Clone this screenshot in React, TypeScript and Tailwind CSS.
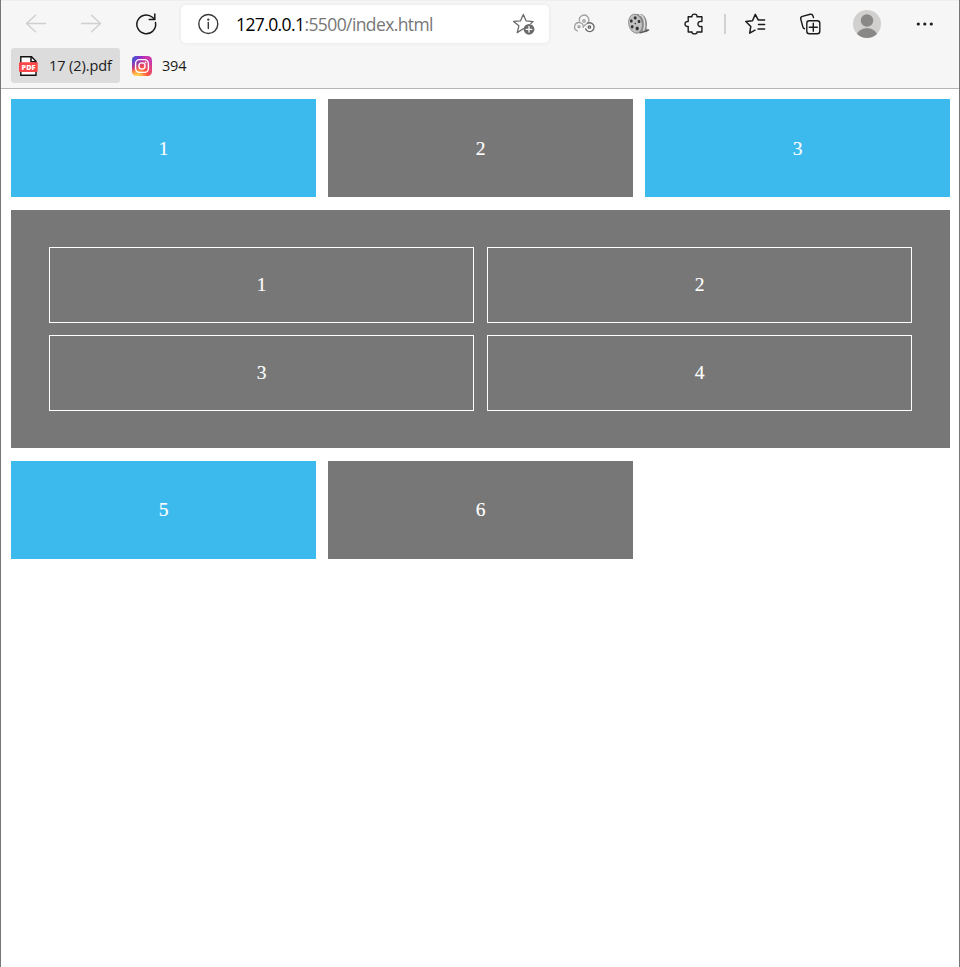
import React from "react";

const svg = {
  width: 30,
  height: 30,
  viewBox: "0 0 30 30",
  fill: "none",
  strokeLinecap: "round" as const,
  strokeLinejoin: "round" as const,
  className: "shrink-0",
};

function Back() {
  return (
    <svg {...svg} stroke="#cfcfcf" strokeWidth="1.4">
      <path d="M24.5 14.5H5.5M14.5 6.3L5.5 14.5L14.5 22.7" />
    </svg>
  );
}

function Forward() {
  return (
    <svg {...svg} stroke="#cfcfcf" strokeWidth="1.4">
      <path d="M5.5 14.5H24.5M15.5 6.3L24.5 14.5L15.5 22.7" />
    </svg>
  );
}

function Reload() {
  return (
    <svg {...svg} stroke="#1b1b1b" strokeWidth="1.5">
      <path d="M24.5 13.6A9.4 9.4 0 1 1 21.4 8.2L23.6 10.3" />
      <path d="M23.8 5V10.6H18.2" />
    </svg>
  );
}

function Info() {
  return (
    <svg {...svg} stroke="#3a3a3a" strokeWidth="1.4">
      <circle cx="15.3" cy="15" r="9.5" />
      <path d="M15.3 13.5V19.5" />
      <circle cx="15.3" cy="10.6" r="0.5" fill="#3a3a3a" />
    </svg>
  );
}

function AddFavorite() {
  return (
    <svg {...svg} stroke="#6b6b6b" strokeWidth="1.3">
      <path d="M14.3 19.7L8.2 23.6L9.9 16.8L4.6 12.4L11.4 11.9L14.3 5.4L17.2 11.9L24.2 12.6L21.8 14.5" />
      <circle cx="20" cy="20.3" r="5.4" fill="#6b6b6b" stroke="none" />
      <path d="M20 17.5V23.1M17.2 20.3H22.8" stroke="#fff" />
    </svg>
  );
}

function Rings() {
  return (
    <svg {...svg} strokeWidth="1.3">
      <path d="M10.6 12.2A4.7 4.7 0 1 1 18.4 14.2C17.2 15.8 15.5 15.6 14.5 17.6" stroke="#a2a2a2" />
      <path d="M8.4 21.9A4.3 4.3 0 1 1 14.2 18.4" stroke="#a2a2a2" />
      <path d="M18.8 14.2A4.4 4.4 0 1 1 16.6 19.8" stroke="#666" />
      <circle cx="15" cy="11.9" r="1.2" stroke="#a0a0a0" />
      <circle cx="10" cy="17.7" r="1" stroke="#a0a0a0" />
      <circle cx="20.4" cy="18" r="1.2" stroke="#5e5e5e" />
    </svg>
  );
}

function FilmReel() {
  return (
    <svg {...svg} stroke="none">
      <path d="M10 5L17 5C21 6 23.3 11 23 16L22.5 19.5L25 21L23 23L17 23.8L12 24.5Z" fill="#898989" />
      <path d="M15.5 5.8C20.5 7 22 15 19.5 22" stroke="#dedede" strokeWidth="1.5" />
      <path d="M16 24L22 21.8L24.8 21" stroke="#555" strokeWidth="1.3" />
      <ellipse cx="11.5" cy="14.6" rx="6.8" ry="9.6" transform="rotate(-12 11.5 14.6)" fill="#c2c2c2" stroke="#858585" strokeWidth="0.8" />
      <g fill="#353535">
        <ellipse cx="11.2" cy="8.9" rx="1.5" ry="1.6" />
        <ellipse cx="7.3" cy="12" rx="1.4" ry="1.8" />
        <ellipse cx="15" cy="12.5" rx="1.4" ry="1.8" />
        <ellipse cx="8.2" cy="17.7" rx="1.4" ry="1.8" />
        <ellipse cx="13.2" cy="19.6" rx="1.6" ry="2" />
        <circle cx="11.3" cy="14.6" r="0.8" />
      </g>
    </svg>
  );
}

function Puzzle() {
  return (
    <svg {...svg} stroke="#1b1b1b" strokeWidth="1.4">
      <path d="M9.2 7.8H13C12.7 6.2 13.9 5.1 15.5 5.1S18.3 6.2 18 7.8H22.9V12.5C20.5 12 18.9 13.1 18.9 15S20.5 18 22.9 17.5V23H18C18.3 24.2 17.2 24.9 15.5 24.9S12.7 24.2 13 23H9.2V17.5C7.2 17.8 6 16.7 6 15S7.2 12.2 9.2 12.5Z" />
    </svg>
  );
}

function Favorites() {
  return (
    <svg {...svg} stroke="#1b1b1b" strokeWidth="1.5">
      <path d="M15 21.2L9.7 24.1L10.8 17.5L5.8 12.5L12.5 11.7L15.3 5.4L18.2 10.9H24.6" />
      <path d="M18.5 15.4H24.6M18 19.9H24.6" />
    </svg>
  );
}

function Collections() {
  return (
    <svg {...svg} stroke="#1b1b1b" strokeWidth="1.4">
      <path d="M9.5 19.7C8.5 19.5 8.1 18.7 7.9 18L5.8 10.3C5.4 8.8 6.1 7.8 7.4 7.4L15.2 5.3C16.5 5 17.6 5.7 18 7L18.5 8.6" />
      <rect x="11.8" y="11.7" width="13" height="13" rx="2.5" />
      <path d="M18.3 14.2V22.2M14.3 18.2H22.3" />
    </svg>
  );
}

function Avatar() {
  return (
    <svg {...svg}>
      <clipPath id="avatar-clip">
        <circle cx="15" cy="15" r="14" />
      </clipPath>
      <circle cx="15" cy="15" r="14" fill="#d2d0ce" />
      <g clipPath="url(#avatar-clip)" fill="#8a8886">
        <circle cx="15" cy="11.5" r="6.2" />
        <ellipse cx="15" cy="28" rx="10.8" ry="9" />
      </g>
    </svg>
  );
}

function More() {
  return (
    <svg {...svg} fill="#1b1b1b">
      <circle cx="8.3" cy="15" r="1.6" />
      <circle cx="14.8" cy="15" r="1.6" />
      <circle cx="21.3" cy="15" r="1.6" />
    </svg>
  );
}

function PdfIcon() {
  return (
    <svg width="20" height="20" viewBox="0 0 20 20" className="shrink-0">
      <path d="M1.8 .8H12.5L17 5.3V19.2H1.8Z" fill="#fff" stroke="#111" strokeWidth="1.4" />
      <path d="M12 1V5.7H17" fill="none" stroke="#111" strokeWidth="1.5" />
      <rect x="0" y="6.3" width="18.7" height="9.7" rx="1" fill="#fb4747" />
      <text x="9.5" y="13.8" textAnchor="middle" fontSize="7.3" fontWeight="800" fill="#fff" fontFamily="Open Sans, sans-serif" textLength="14">
        PDF
      </text>
    </svg>
  );
}

function InstagramIcon() {
  return (
    <svg width="20" height="20" viewBox="0 0 20 20" className="shrink-0">
      <defs>
        <radialGradient id="ig-warm" cx="0.27" cy="1.05" r="1">
          <stop offset="0" stopColor="#ffdd55" />
          <stop offset=".2" stopColor="#ffb84c" />
          <stop offset=".5" stopColor="#ff543e" />
          <stop offset="1" stopColor="#c837ab" />
        </radialGradient>
        <radialGradient id="ig-cool" cx="-.1" cy="0" r=".8">
          <stop offset="0" stopColor="#3771c8" />
          <stop offset=".3" stopColor="#4c55d0" />
          <stop offset="1" stopColor="#6600ff" stopOpacity="0" />
        </radialGradient>
      </defs>
      <rect width="20" height="20" rx="4.5" fill="url(#ig-warm)" />
      <rect width="20" height="20" rx="4.5" fill="url(#ig-cool)" />
      <g fill="none" stroke="#fff" strokeWidth="1.4">
        <rect x="3.6" y="3.6" width="12.8" height="12.8" rx="3.8" />
        <circle cx="10" cy="10" r="3.1" />
      </g>
      <circle cx="13.6" cy="6.4" r="0.9" fill="#fff" />
    </svg>
  );
}

function Toolbar() {
  return (
    <div className="mb-[2px] flex h-[45px] items-center pl-5">
      <div className="flex w-[140px] shrink-0 justify-between">
        <Back />
        <Forward />
        <Reload />
      </div>
      <div className="ml-5 flex h-[38px] w-[368px] shrink-0 items-center rounded-[5px] bg-white pl-3 shadow-[0_0_4px_rgba(0,0,0,0.07)]">
        <Info />
        <span className="ml-[13px] flex-1 whitespace-nowrap text-[17.5px] leading-6 tracking-[-0.6px] text-[#767676]">
          <span className="text-black">127.0.0.1</span>:5500/index.html
        </span>
        <span className="mr-[10px] flex">
          <AddFavorite />
        </span>
      </div>
      <div className="ml-5 flex w-[140px] shrink-0 justify-between">
        <Rings />
        <FilmReel />
        <Puzzle />
      </div>
      <div className="ml-[15px] h-5 w-[2px] shrink-0 bg-[#d2d2d2]" />
      <div className="ml-[14px] flex w-[85px] shrink-0 justify-between">
        <Favorites />
        <Collections />
      </div>
      <div className="ml-[27px] flex w-[88px] shrink-0 justify-between">
        <Avatar />
        <More />
      </div>
    </div>
  );
}

function Bookmarks() {
  return (
    <div className="flex items-center pl-[10px] text-[14.5px] text-[#1b1b1b]">
      <div className="flex h-[35px] w-[109px] items-center rounded-[3px] bg-[#dcdcdc] pl-2">
        <PdfIcon />
        <span className="ml-[10px] whitespace-nowrap tracking-[-0.08px]">17 (2).pdf</span>
      </div>
      <div className="ml-3 flex h-[35px] items-center">
        <InstagramIcon />
        <span className="ml-[10px] tracking-[-0.2px]">394</span>
      </div>
    </div>
  );
}

function Tile({ label, color }: { label: string; color: string }) {
  return <div className={`flex h-[98px] items-center justify-center ${color}`}>{label}</div>;
}

const blue = "bg-[#3dbaed]";
const gray = "bg-[#777777]";

const blueTop = "bg-[#3dbaed] pt-[2px]";
const grayTop = "bg-[#777777] pt-[2px]";

export default function App() {
  return (
    <div className="h-[967px] w-[960px] overflow-hidden border-x border-[#767676] bg-white font-['Open_Sans',sans-serif]">
      <header className="h-[89px] border-t border-b border-t-[#eeeeee] border-b-[#b5b5b5] bg-[#f6f6f6]">
        <Toolbar />
        <Bookmarks />
      </header>
      <main className="grid grid-cols-[305px_305px_305px] gap-x-3 gap-y-[13px] pt-[10px] pl-[10px] font-['Liberation_Serif',serif] text-[19.5px] leading-[22px] text-white [-webkit-text-stroke:0.15px_white]">
        <Tile label="1" color={blueTop} />
        <Tile label="2" color={grayTop} />
        <Tile label="3" color={blueTop} />
        <section className={`col-span-3 grid h-[238px] grid-cols-2 grid-rows-2 gap-x-[13px] gap-y-3 px-[38px] py-[37px] ${gray}`}>
          {["1", "2", "3", "4"].map((n) => (
            <div key={n} className="flex items-center justify-center border border-white">
              {n}
            </div>
          ))}
        </section>
        <Tile label="5" color={blue} />
        <Tile label="6" color={gray} />
      </main>
    </div>
  );
}
